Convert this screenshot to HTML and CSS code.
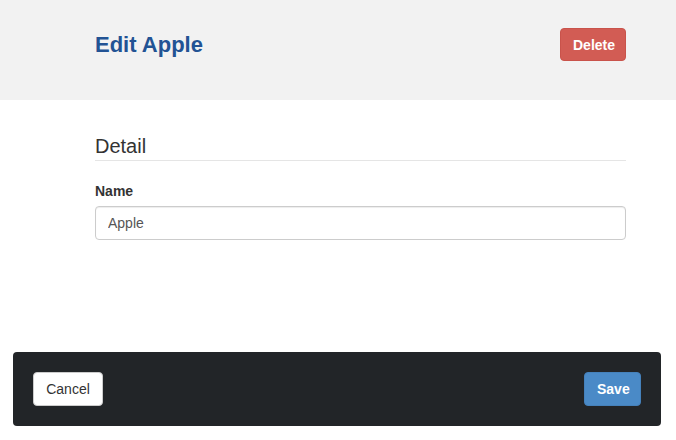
FILE: index.html
```html
<!DOCTYPE html>
<html>
<head>
<meta charset="utf-8">
<link rel="stylesheet" href="styles.css">
</head>
<body>
<header class="page-header">
  <div class="header-inner">
    <h1 class="title">Edit Apple</h1>
    <button class="btn btn-danger">Delete</button>
  </div>
</header>
<main class="content">
  <h2 class="section-title">Detail</h2>
  <label class="field-label" for="name">Name</label>
  <input class="field-input" id="name" type="text" value="Apple">
</main>
<footer class="action-bar">
  <button class="btn btn-default">Cancel</button>
  <button class="btn btn-primary">Save</button>
</footer>
</body>
</html>
```
FILE: styles.css
```css
* { box-sizing: border-box; }
html, body { margin: 0; padding: 0; }
body {
  font-family: "Liberation Sans", Arial, sans-serif;
  font-size: 14px;
  color: #333;
  background: #fff;
  width: 676px;
  height: 440px;
  position: relative;
}
.page-header {
  background: #f2f2f2;
  height: 100px;
  padding: 28px 50px 0 95px;
}
.header-inner {
  display: flex;
  justify-content: space-between;
  align-items: flex-start;
}
.title {
  margin: 4px 0 0;
  font-size: 22px;
  font-weight: bold;
  color: #225394;
  line-height: 26px;
}
.btn {
  font-family: "Liberation Sans", Arial, sans-serif;
  font-size: 14px;
  height: 34px;
  padding: 0 12px;
  border-radius: 4px;
  border: 1px solid transparent;
  cursor: pointer;
}
.btn-danger {
  background: #d25c54;
  border-color: #c9534b;
  color: #fff;
  font-weight: bold;
  width: 66px;
  height: 33px;
}
.content {
  padding: 0 50px 0 95px;
}
.section-title {
  margin: 34px 0 0;
  font-size: 20px;
  font-weight: normal;
  color: #333;
  line-height: 24px;
  padding-bottom: 2px;
  border-bottom: 1px solid #e5e5e5;
}
.field-label {
  display: block;
  margin-top: 22px;
  font-weight: bold;
  font-size: 14px;
  line-height: 16px;
  color: #333;
}
.field-input {
  display: block;
  width: 100%;
  margin-top: 7px;
  height: 34px;
  padding: 6px 12px;
  font-family: "Liberation Sans", Arial, sans-serif;
  font-size: 14px;
  color: #555;
  border: 1px solid #ccc;
  border-radius: 4px;
  box-shadow: inset 0 1px 1px rgba(0,0,0,0.075);
}
.action-bar {
  position: absolute;
  left: 13px;
  top: 352px;
  width: 648px;
  height: 74px;
  background: #222528;
  border-radius: 4px;
  display: flex;
  justify-content: space-between;
  align-items: center;
  padding: 0 20px;
}
.btn-default {
  background: #fff;
  border-color: #ccc;
  color: #333;
  width: 70px;
}
.btn-primary {
  background: #4a8ac7;
  border-color: #4581bb;
  color: #fff;
  font-weight: bold;
  width: 57px;
}
```
